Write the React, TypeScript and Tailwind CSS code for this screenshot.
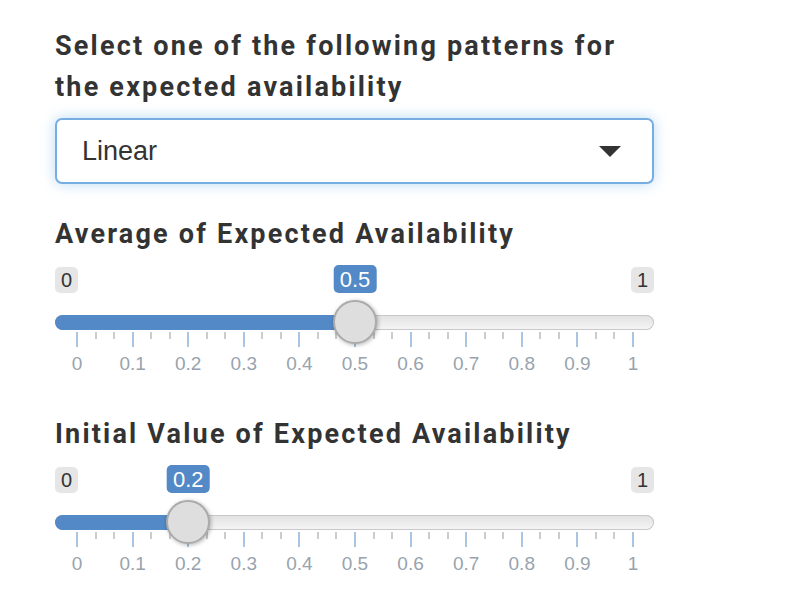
import React from 'react';

const GRID_START = 22; // px from slider left to the "0" grid line
const GRID_RANGE = 556; // px between the "0" and "1" grid lines

const sans = "[font-family:'Liberation_Sans',Arial,sans-serif]";

interface SliderProps {
  value: number;
}

function Slider({ value }: SliderProps) {
  const center = GRID_START + value * GRID_RANGE;
  const ticks = Array.from({ length: 31 }, (_, i) => i);
  const labels = Array.from({ length: 11 }, (_, i) => (i === 0 ? '0' : i === 10 ? '1' : `0.${i}`));

  return (
    <div className="mt-[10px] w-[599px]">
      {/* min / max / current value */}
      <div className="relative flex h-[28px] items-end justify-between">
        <span className={`flex h-[26px] w-[23px] items-center justify-center rounded-[5px] bg-[#e6e6e6] text-[20px] text-[#333] ${sans}`}>
          0
        </span>
        <span className={`flex h-[26px] w-[23px] items-center justify-center rounded-[5px] bg-[#e6e6e6] text-[20px] text-[#333] ${sans}`}>
          1
        </span>
        <span
          className={`absolute top-0 flex h-[28px] -translate-x-1/2 items-center rounded-[5px] bg-[#5289c6] px-[6px] text-[22px] text-white ${sans}`}
          style={{ left: center }}
        >
          {value.toFixed(1)}
        </span>
      </div>

      {/* track */}
      <div className="relative mt-[22px] flex h-[15px] rounded-full bg-gradient-to-b from-[#e2e2e2] to-[#f5f5f5] shadow-[inset_0_0_0_1px_#c8c8c8]">
        <div className="h-full rounded-l-full bg-[#5289c6]" style={{ width: center }} />
        <div
          className="absolute top-[-15px] h-[44px] w-[44px] -translate-x-1/2 rounded-full border-2 border-[#ababab] bg-[#dedede] shadow-[1px_1px_4px_rgba(0,0,0,0.3)]"
          style={{ left: center }}
        />
      </div>

      {/* grid ticks */}
      <div className="mt-[2px] flex items-start justify-between pl-[21px] pr-[20px]">
        {ticks.map((i) =>
          i % 3 === 0 ? (
            <div key={i} className="h-[15px] w-[2px] bg-[#a9c5e4]" />
          ) : (
            <div key={i} className="h-[7px] w-[2px] bg-[#cccccc]" />
          ),
        )}
      </div>

      {/* grid labels */}
      <div className="mt-[6px] flex justify-between pl-[21px] pr-[20px]">
        {labels.map((l) => (
          <div key={l} className="flex w-[2px] justify-center">
            <span className={`whitespace-nowrap text-[19px] leading-[22px] text-[#99a3ad] ${sans}`}>{l}</span>
          </div>
        ))}
      </div>
    </div>
  );
}

export default function App() {
  return (
    <div className="min-h-[605px] w-[799px] bg-white px-[55px] pt-[26px] text-[#333] [font-family:Roboto,'Liberation_Sans',sans-serif]">
      <label className="block w-[600px] text-[27px] font-bold leading-[41px] tracking-[2.2px]">
        Select one of the following patterns for the expected availability
      </label>

      <div className="mt-[10px] flex h-[66px] w-[599px] items-center justify-between rounded-[7px] border-2 border-[#77aee2] bg-white pl-[25px] pr-[31px] shadow-[0_0_14px_rgba(102,175,233,0.45)]">
        <span className={`text-[27px] text-[#333] ${sans}`}>Linear</span>
        <span className="h-0 w-0 border-x-[11px] border-t-[11px] border-x-transparent border-t-[#333]" />
      </div>

      <label className="mt-[30px] block text-[27px] font-bold leading-[41px] tracking-[2.2px]">
        Average of Expected Availability
      </label>
      <Slider value={0.5} />

      <label className="mt-[39px] block text-[27px] font-bold leading-[41px] tracking-[2.2px]">
        Initial Value of Expected Availability
      </label>
      <Slider value={0.2} />
    </div>
  );
}
